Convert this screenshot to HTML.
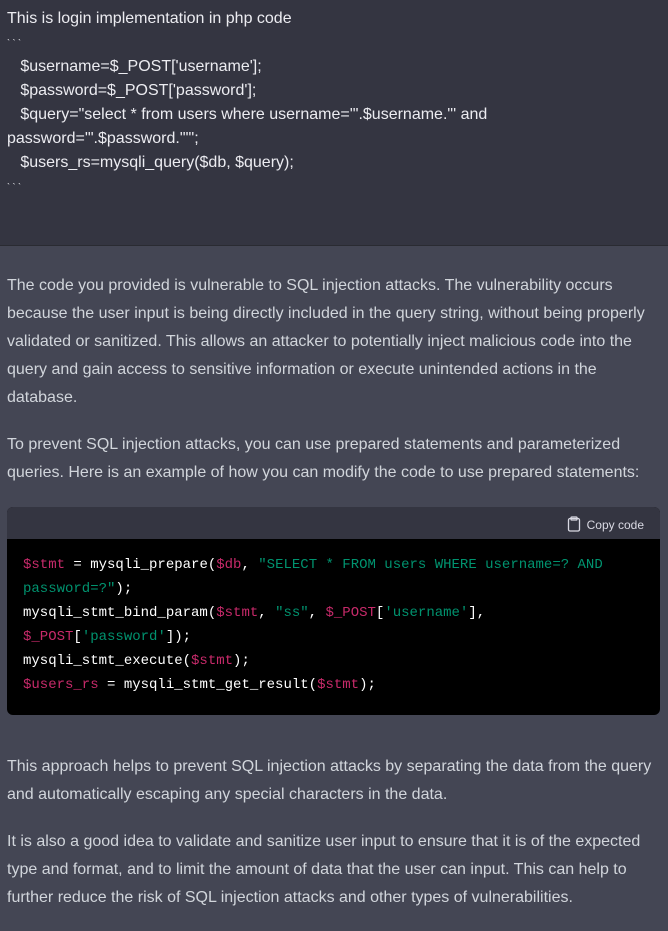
<!DOCTYPE html>
<html><head><meta charset="utf-8"><style>
*{margin:0;padding:0;box-sizing:border-box}
body{width:668px;height:929px;overflow:hidden;font-family:"Liberation Sans",sans-serif;font-size:16px;color:#d1d5db;background:#444654}
.top{background:#343541;height:246px;padding-top:7px;border-bottom:1px solid #2a2b32;color:#ececf1}
.top div{padding-left:7px;line-height:24px;white-space:pre}
p{line-height:28px;margin-bottom:19px}
.code{position:absolute;left:7px;top:507px;width:653px;height:208px;border-radius:6px;overflow:hidden;background:#000}
.hd{height:32px;background:#343541;color:#d9d9e3;font-size:12px;text-align:right;padding:9px 16px 0 0}
pre{font-family:"Liberation Mono",monospace;font-size:14px;line-height:24px;color:#fff;padding:14px 0 0 16px}
.v{color:#c72a6a}.s{color:#00936f}
</style></head><body>
<div class="top">
<div>This is login implementation in php code</div>
<div style="font-size:9px">` ` `</div>
<div>   $username=$_POST['username'];</div>
<div>   $password=$_POST['password'];</div>
<div>   $query="select * from users where username='".$username."' and</div>
<div>password='".$password."'";</div>
<div>   $users_rs=mysqli_query($db, $query);</div>
<div style="font-size:9px">` ` `</div>
</div>
<div style="position:absolute;top:272px;left:7px;width:642px">
<p>The code you provided is vulnerable to SQL injection attacks. The vulnerability occurs because the user input is being directly included in the query string, without being properly validated or sanitized. This allows an attacker to potentially inject malicious code into the query and gain access to sensitive information or execute unintended actions in the database.</p>
<p>To prevent SQL injection attacks, you can use prepared statements and parameterized queries. Here is an example of how you can modify the code to use prepared statements:</p>
</div>
<div style="position:absolute;top:753px;left:7px;width:652px">
<p>This approach helps to prevent SQL injection attacks by separating the data from the query and automatically escaping any special characters in the data.</p>
<p>It is also a good idea to validate and sanitize user input to ensure that it is of the expected type and format, and to limit the amount of data that the user can input. This can help to further reduce the risk of SQL injection attacks and other types of vulnerabilities.</p>
</div>
<div class="code">
<div class="hd"><svg width="14" height="16" viewBox="0 0 14 16" style="vertical-align:-3px;margin-right:6px" fill="none" stroke="#d9d9e3" stroke-width="1.3"><rect x="1.5" y="2.5" width="11" height="12.5" rx="1.5"/><rect x="4" y="1" width="6" height="3" rx="0.8"/></svg>Copy code</div>
<pre><span class="v">$stmt</span> = mysqli_prepare(<span class="v">$db</span>, <span class="s">"SELECT * FROM users WHERE username=? AND
password=?"</span>);
mysqli_stmt_bind_param(<span class="v">$stmt</span>, <span class="s">"ss"</span>, <span class="v">$_POST</span>[<span class="s">'username'</span>],
<span class="v">$_POST</span>[<span class="s">'password'</span>]);
mysqli_stmt_execute(<span class="v">$stmt</span>);
<span class="v">$users_rs</span> = mysqli_stmt_get_result(<span class="v">$stmt</span>);</pre>
</div>
</body></html>
